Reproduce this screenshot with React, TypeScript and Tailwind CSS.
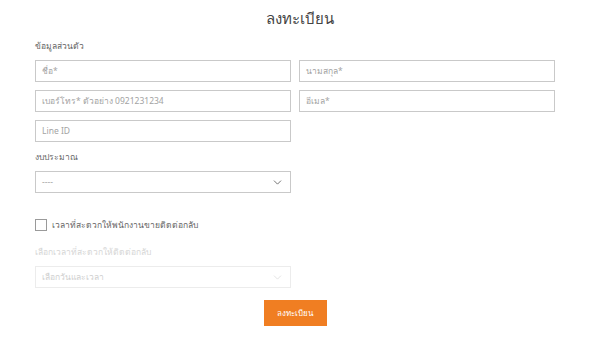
import React from "react";
import { ChevronDown } from "lucide-react";

const inputCls =
  "h-[22px] w-full border border-[#c9c9c9] bg-white px-[6px] text-[8.5px] leading-[10px] text-[#a3a3a3] flex items-center";

const Field = ({ placeholder }: { placeholder: string }) => (
  <div className={inputCls}>{placeholder}</div>
);

export default function App() {
  return (
    <div
      className="w-[600px] h-[337px] bg-white overflow-hidden"
      style={{ fontFamily: '"Noto Sans", "Liberation Sans", sans-serif' }}
    >
      <div className="flex justify-center pt-[9px]">
        <h1 className="text-[15px] leading-[18px] text-[#444] font-light">
          ลงทะเบียน
        </h1>
      </div>

      <div className="px-[35px] mt-[14px]">
        <p className="text-[8.5px] leading-[10px] text-[#666]">ข้อมูลส่วนตัว</p>

        <div className="mt-[9px] grid grid-cols-[256px_256px] gap-x-[8px] gap-y-[8px]">
          <Field placeholder="ชื่อ*" />
          <Field placeholder="นามสกุล*" />
          <Field placeholder="เบอร์โทร* ตัวอย่าง 0921231234" />
          <Field placeholder="อีเมล*" />
          <Field placeholder="Line ID" />
        </div>

        <p className="mt-[10px] text-[8.5px] leading-[10px] text-[#666]">
          งบประมาณ
        </p>
        <div className="mt-[9px] w-[256px] h-[22px] border border-[#c9c9c9] flex items-center justify-between px-[6px]">
          <span className="text-[8.5px] leading-[10px] text-[#a3a3a3]">----</span>
          <ChevronDown size={13} strokeWidth={1.5} className="text-[#555]" />
        </div>

        <div className="mt-[26px] h-[12px] flex items-center gap-[5px]">
          <div className="w-[12px] h-[12px] border border-[#9a9a9a] bg-white" />
          <span className="text-[8.5px] leading-[10px] text-[#666]">
            เวลาที่สะดวกให้พนักงานขายติดต่อกลับ
          </span>
        </div>

        <p className="mt-[16px] text-[8.5px] leading-[10px] text-[#d6d6d6]">
          เลือกเวลาที่สะดวกให้ติดต่อกลับ
        </p>
        <div className="mt-[9px] w-[256px] h-[22px] border border-[#ececec] flex items-center justify-between px-[6px]">
          <span className="text-[8.5px] leading-[10px] text-[#d0d0d0]">
            เลือกวันและเวลา
          </span>
          <ChevronDown size={13} strokeWidth={1.2} className="text-[#d6d6d6]" />
        </div>
      </div>

      <div className="flex justify-center mt-[12px] pr-[10px]">
        <button className="w-[63px] h-[26px] bg-[#f07e22] text-white text-[8px] leading-[10px] flex items-center justify-center">
          ลงทะเบียน
        </button>
      </div>
    </div>
  );
}
